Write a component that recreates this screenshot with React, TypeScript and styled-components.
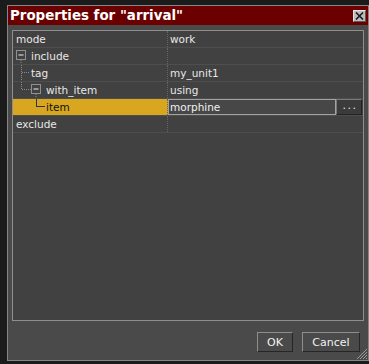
import React from 'react';
import styled, { createGlobalStyle } from 'styled-components';

const GlobalStyle = createGlobalStyle`
  html, body {
    margin: 0;
    padding: 0;
    background: #1b1b1b;
  }
  body {
    width: 369px;
    height: 364px;
    overflow: hidden;
    font-family: "DejaVu Sans", Verdana, sans-serif;
  }
`;

const Screen = styled.div`
  width: 369px;
  height: 364px;
  box-sizing: border-box;
  padding: 5px 0 0 7px;
`;

const Window = styled.div`
  position: relative;
  width: 362px;
  height: 356px;
  box-sizing: border-box;
  border: 1px solid #858585;
  background: #4a4a4a;
  display: flex;
  flex-direction: column;
`;

const TitleBar = styled.div`
  height: 19px;
  flex: none;
  background: #6a0000;
  display: flex;
  align-items: center;
  justify-content: space-between;
  padding: 0 2px;
  color: #ffffff;
  font-weight: bold;
  font-size: 13.4px;
`;

const CloseButton = styled.div`
  width: 13px;
  height: 12px;
  box-sizing: border-box;
  background: #bdbdbd;
  border-top: 1px solid #e4e4e4;
  border-left: 1px solid #e4e4e4;
  border-right: 1px solid #5a5a5a;
  border-bottom: 1px solid #5a5a5a;
  display: flex;
  align-items: center;
  justify-content: center;
`;

const TreeBox = styled.div`
  margin: 5px 4px 0 4px;
  height: 291px;
  box-sizing: border-box;
  border: 1px solid #8e8e8e;
  background: #414141;
  flex: none;
`;

const Row = styled.div`
  display: grid;
  grid-template-columns: 155px 1fr;
  height: 17px;
  box-sizing: border-box;
  border-bottom: 1px solid #4e4e4e;
  font-size: 10.5px;
  color: #e8e8e8;
`;

const NameCell = styled.div<{ $selected?: boolean }>`
  display: flex;
  align-items: center;
  height: 16px;
  padding-left: 3px;
  box-sizing: border-box;
  border-right: 1px dotted #666666;
  background: ${(p) => (p.$selected ? '#d9a61f' : 'transparent')};
  color: ${(p) => (p.$selected ? '#111111' : '#e8e8e8')};
  white-space: nowrap;
`;

const ValueCell = styled.div<{ $flush?: boolean }>`
  display: flex;
  align-items: center;
  height: 16px;
  padding-left: ${(p) => (p.$flush ? 0 : 2)}px;
  white-space: nowrap;
`;

const Label = styled.span`
  line-height: 16px;
`;

const EditRow = styled.div`
  display: flex;
  height: 16px;
  width: 100%;
`;

const EditInput = styled.div`
  flex: 1;
  height: 16px;
  box-sizing: border-box;
  background: #474747;
  border: 1px solid #a3a3a3;
  padding-left: 1px;
  display: flex;
  align-items: center;
  color: #f0f0f0;
`;

const EllipsisButton = styled.div`
  width: 26px;
  margin-right: 1px;
  height: 16px;
  box-sizing: border-box;
  background: #3b3b3b;
  border-top: 1px solid #7a7a7a;
  border-left: 1px solid #7a7a7a;
  border-right: 1px solid #222222;
  border-bottom: 1px solid #222222;
  color: #e8e8e8;
  display: flex;
  align-items: center;
  justify-content: center;
  font-size: 11px;
  letter-spacing: 1.5px;
  line-height: 1;
  padding: 0 0 3px 2px;
`;

const Footer = styled.div`
  display: flex;
  justify-content: flex-end;
  gap: 9px;
  padding: 11px 8px 0 0;
`;

const Button = styled.div<{ $w: number }>`
  width: ${(p) => p.$w}px;
  height: 20px;
  box-sizing: border-box;
  border-top: 1px solid #8e8e8e;
  border-left: 1px solid #8e8e8e;
  border-right: 1px solid #262626;
  border-bottom: 1px solid #262626;
  background: #4a4a4a;
  color: #f2f2f2;
  font-size: 11px;
  display: flex;
  align-items: center;
  justify-content: center;
`;

const Grip = styled.svg`
  position: absolute;
  right: 0;
  bottom: 0;
`;

const dot = { stroke: '#8a8a8a', strokeWidth: 1, strokeDasharray: '1 1' };

type Glyph = 'open' | 'branch' | 'last' | 'corner' | 'blank';

function TreeGlyph({ kind }: { kind: Glyph }): React.ReactElement {
  return (
    <svg width="15" height="16" viewBox="0 0 15 16" style={{ flex: 'none' }}>
      {kind === 'open' && (
        <>
          <rect x="0.5" y="2.5" width="9" height="9" fill="none" stroke="#e0e0e0" strokeDasharray="1 1" />
          <line x1="2.5" y1="7" x2="7.5" y2="7" stroke="#f0f0f0" strokeWidth="1" />
          <line x1="5" y1="12" x2="5" y2="16" style={dot} />
        </>
      )}
      {kind === 'branch' && (
        <>
          <line x1="5.5" y1="0" x2="5.5" y2="16" style={dot} />
          <line x1="6" y1="7.5" x2="14" y2="7.5" style={dot} />
        </>
      )}
      {kind === 'last' && (
        <>
          <line x1="5.5" y1="0" x2="5.5" y2="8" style={dot} />
          <line x1="6" y1="7.5" x2="15" y2="7.5" style={dot} />
        </>
      )}
      {kind === 'corner' && (
        <>
          <line x1="5.5" y1="0" x2="5.5" y2="8" stroke="#2d3350" strokeWidth="1" />
          <line x1="5" y1="7.5" x2="14" y2="7.5" stroke="#2d3350" strokeWidth="1" />
        </>
      )}
    </svg>
  );
}

function App(): React.ReactElement {
  return (
    <Screen>
      <GlobalStyle />
      <Window>
        <TitleBar>
          <span>Properties for &quot;arrival&quot;</span>
          <CloseButton>
            <svg width="9" height="8" viewBox="0 0 9 8">
              <path d="M1 0.5 L8 7.5 M8 0.5 L1 7.5" stroke="#1a1a1a" strokeWidth="1.6" />
            </svg>
          </CloseButton>
        </TitleBar>
        <TreeBox>
          <Row>
            <NameCell>
              <Label>mode</Label>
            </NameCell>
            <ValueCell>work</ValueCell>
          </Row>
          <Row>
            <NameCell>
              <TreeGlyph kind="open" />
              <Label>include</Label>
            </NameCell>
            <ValueCell />
          </Row>
          <Row>
            <NameCell>
              <TreeGlyph kind="branch" />
              <Label>tag</Label>
            </NameCell>
            <ValueCell>my_unit1</ValueCell>
          </Row>
          <Row>
            <NameCell>
              <TreeGlyph kind="last" />
              <TreeGlyph kind="open" />
              <Label>with_item</Label>
            </NameCell>
            <ValueCell>using</ValueCell>
          </Row>
          <Row>
            <NameCell $selected>
              <TreeGlyph kind="blank" />
              <TreeGlyph kind="corner" />
              <Label>item</Label>
            </NameCell>
            <ValueCell $flush>
              <EditRow>
                <EditInput>morphine</EditInput>
                <EllipsisButton>...</EllipsisButton>
              </EditRow>
            </ValueCell>
          </Row>
          <Row>
            <NameCell>
              <Label>exclude</Label>
            </NameCell>
            <ValueCell />
          </Row>
        </TreeBox>
        <Footer>
          <Button $w={36}>OK</Button>
          <Button $w={58}>Cancel</Button>
        </Footer>
        <Grip width="12" height="12" viewBox="0 0 12 12">
          <path d="M11 1 L1 11 M11 4 L4 11 M11 7 L7 11 M11 10 L10 11" stroke="#9a9a9a" strokeWidth="1" />
        </Grip>
      </Window>
    </Screen>
  );
}

export default App;
